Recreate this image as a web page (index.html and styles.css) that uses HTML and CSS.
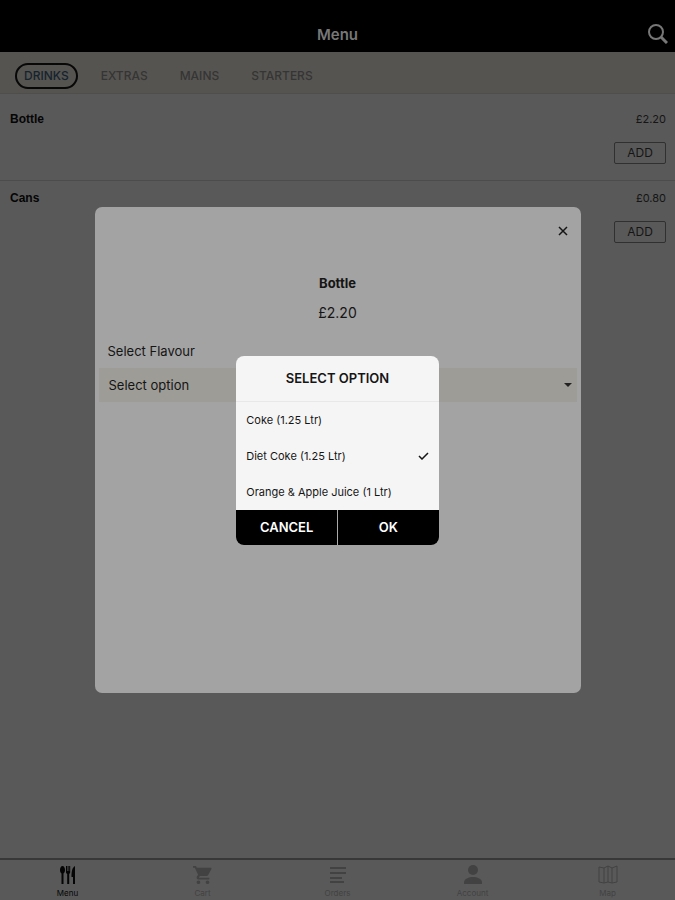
FILE: index.html
```html
<!DOCTYPE html>
<html lang="en">
<head>
    <meta charset="UTF-8">
    <meta name="viewport" content="width=device-width, initial-scale=1.0">
    <title>Menu</title>
    <link rel="stylesheet" href="styles.css">
</head>
<body>
    <header class="header">
        <span></span>
        <h1>Menu</h1>
        <button type="button" class="searchButton" aria-label="Search">
            <svg width="20" height="20" viewBox="0 0 20 20" fill="none" stroke="currentColor">
                <circle cx="8" cy="8" r="7" stroke-width="2"/>
                <path d="M13 13l6 6" stroke-width="3"/>
            </svg>
        </button>
    </header>
    <nav class="categories">
        <a href="#drinks" class="active">DRINKS</a>
        <a href="#extras">EXTRAS</a>
        <a href="#mains">MAINS</a>
        <a href="#starters">STARTERS</a>
    </nav>
    <main class="items">
        <div class="item">
            <h2>Bottle</h2>
            <div class="itemSide">
                <span class="price">£2.20</span>
                <button type="button" class="addButton">ADD</button>
            </div>
        </div>
        <div class="item">
            <h2>Cans</h2>
            <div class="itemSide">
                <span class="price">£0.80</span>
                <button type="button" class="addButton">ADD</button>
            </div>
        </div>
    </main>
    <nav class="bottomNav">
        <a href="#menu" class="active">
            <svg width="20" height="20" viewBox="0 0 20 20" fill="currentColor">
                <path d="M4.500 1C6 1 7 3 7 5S6.200 8 5.500 8.500V19h-2V8.500C2.800 8 2 7 2 5s1-4 2.500-4z"/>
                <path d="M8 1h1v5h.6V1h1v5h.6V1h1v6c0 1-.4 1.500-1 2v10h-2V9C8.400 8.500 8 8 8 7z"/>
                <path d="M17 1v18h-2v-7h-1.500C13.500 7 14 2.500 17 1z"/>
            </svg>
            <span>Menu</span>
        </a>
        <a href="#cart">
            <svg width="20" height="20" viewBox="1 1 22 22" fill="currentColor">
                <path d="M7 18c-1.100 0-2 .9-2 2s.9 2 2 2 2-.9 2-2-.9-2-2-2zM1 2v2h2l3.600 7.600-1.400 2.400C4.500 15.400 5.500 17 7 17h12v-2H7.400l1.100-2h7.500c.7 0 1.400-.4 1.700-1L21.300 5.500C21.700 4.800 21.200 4 20.400 4H5.200l-.9-2H1zm16 16c-1.100 0-2 .9-2 2s.9 2 2 2 2-.9 2-2-.9-2-2-2z"/>
            </svg>
            <span>Cart</span>
        </a>
        <a href="#orders">
            <svg width="20" height="20" viewBox="0 0 20 20" fill="currentColor">
                <path d="M2 2h16v2H2zM2 7h16v2H2zM2 12h12v2H2zM2 16h14v2H2z"/>
            </svg>
            <span>Orders</span>
        </a>
        <a href="#account">
            <svg width="20" height="20" viewBox="0 0 20 20" fill="currentColor">
                <circle cx="10" cy="5" r="5"/>
                <path d="M1 19v-2c0-3 5-5 9-5s9 2 9 5v2z"/>
            </svg>
            <span>Account</span>
        </a>
        <a href="#map">
            <svg width="20" height="20" viewBox="0 0 20 20" fill="none" stroke="currentColor">
                <path d="M1 2l5 1v15l-5-1zM6 3l4-2v16l-4 1M10 1l4 2v15l-4-1M14 3l5-2v16l-5 1"/>
            </svg>
            <span>Map</span>
        </a>
    </nav>

    <div class="overlay">
        <section class="productModal" aria-label="Bottle">
            <button type="button" class="closeButton" aria-label="Close">
                <svg width="10" height="10" viewBox="0 0 10 10" stroke="currentColor" stroke-width="1.500">
                    <path d="M1 1l8 8M9 1l-8 8"/>
                </svg>
            </button>
            <h2>Bottle</h2>
            <p class="productPrice">£2.20</p>
            <label for="flavour">Select Flavour</label>
            <div class="selectBox">
                <select id="flavour">
                    <option>Select option</option>
                </select>
                <svg width="8" height="4" viewBox="0 0 8 4" fill="currentColor">
                    <path d="M0 0h8L4 4z"/>
                </svg>
            </div>
        </section>
    </div>

    <div class="overlay">
        <form class="dialog" role="dialog" aria-labelledby="dialogTitle">
            <h2 id="dialogTitle">SELECT OPTION</h2>
            <label class="option">
                <input type="radio" name="option">
                Coke (1.25 Ltr)
            </label>
            <label class="option">
                <input type="radio" name="option" checked>
                Diet Coke (1.25 Ltr)
                <svg width="11" height="8" viewBox="0 0 11 8" fill="none" stroke="currentColor" stroke-width="1.500">
                    <path d="M1 4l3 3 6-6"/>
                </svg>
            </label>
            <label class="option">
                <input type="radio" name="option">
                Orange &amp; Apple Juice (1 Ltr)
            </label>
            <div class="dialogButtons">
                <button type="button">CANCEL</button>
                <button type="button">OK</button>
            </div>
        </form>
    </div>
</body>
</html>
```

FILE: styles.css
```css
* {
    box-sizing: border-box;
}

body {
    font-family: "Inter", sans-serif;
    font-size: 12px;
    background-color: #595959;
    color: #151515;
    margin: 0;
    display: flex;
    flex-direction: column;
    min-height: 100vh;
}

h1, h2, p {
    margin: 0;
}

button {
    font-family: inherit;
    cursor: pointer;
}

a {
    text-decoration: none;
}

.header {
    display: grid;
    grid-template-columns: 1fr auto 1fr;
    align-items: center;
    background-color: #000;
    color: #777;
    padding: 16px 7px 0;
    height: 52px;
}

.header h1 {
    font-size: 15px;
    font-weight: 600;
}

.searchButton {
    justify-self: end;
    display: flex;
    padding: 0;
    border: none;
    background: none;
    color: #777;
}

.categories {
    display: flex;
    align-items: center;
    gap: 14px;
    height: 42px;
    padding: 6px 15px 0;
    background-color: #565450;
    border-bottom: 1px solid #504e4a;
}

.categories a {
    padding: 4px 7px;
    border: 2px solid transparent;
    border-radius: 13px;
    line-height: 14px;
    color: #353535;
    font-weight: 500;
}

.categories .active {
    border-color: #080808;
    color: #15232f;
}

.items {
    flex-grow: 1;
    padding-top: 8px;
}

.item {
    display: flex;
    justify-content: space-between;
    padding: 9px 9px 16px 10px;
    border-bottom: 1px solid #4c4c4c;
}

.item:last-child {
    border-bottom: none;
}

.item h2 {
    font-family: "Liberation Sans", sans-serif;
    font-size: 12px;
    line-height: 16px;
    color: #050505;
}

.itemSide {
    display: flex;
    flex-direction: column;
    align-items: flex-end;
    gap: 15px;
}

.price {
    font-size: 11px;
    line-height: 16px;
}

.addButton {
    width: 52px;
    height: 22px;
    padding: 0;
    border: 1px solid #303030;
    border-radius: 2px;
    background: none;
    color: #151515;
    font-size: 12px;
    line-height: 20px;
}

.bottomNav {
    display: flex;
    border-top: 2px solid #383838;
    padding: 5px 0 1px;
}

.bottomNav a {
    flex: 1;
    display: flex;
    flex-direction: column;
    align-items: center;
    gap: 3px;
    color: #424242;
    font-size: 8px;
    line-height: 11px;
}

.bottomNav .active {
    color: #050505;
}

.overlay {
    position: fixed;
    inset: 0;
    display: flex;
    align-items: center;
    justify-content: center;
}

.productModal {
    display: flex;
    flex-direction: column;
    width: 72%;
    aspect-ratio: 1;
    padding: 16px 4px;
    background-color: #a3a3a3;
    border-radius: 7px;
}

.closeButton {
    align-self: flex-end;
    display: flex;
    margin: 0 6px 34px;
    padding: 3px;
    border: none;
    background: none;
    color: #151515;
}

.productModal h2 {
    font-size: 13px;
    font-weight: 700;
    line-height: 20px;
    text-align: center;
}

.productPrice {
    margin: 10px 0 18px;
    font-size: 14px;
    line-height: 20px;
    text-align: center;
}

.productModal label {
    padding: 0 9px;
    font-size: 13px;
    line-height: 20px;
}

.selectBox {
    display: grid;
    align-items: center;
    margin-top: 7px;
    color: #222;
}

.selectBox select {
    grid-area: 1 / 1;
    appearance: none;
    width: 100%;
    height: 34px;
    padding: 0 10px;
    border: none;
    background-color: #9e9c96;
    color: #151515;
    font-family: inherit;
    font-size: 13px;
}

.selectBox svg {
    grid-area: 1 / 1;
    justify-self: end;
    margin-right: 5px;
    pointer-events: none;
}

.dialog {
    width: 30%;
    min-width: 202px;
    background-color: #f5f5f5;
    border-radius: 8px;
    overflow: hidden;
}

.dialog h2 {
    font-size: 13px;
    font-weight: 600;
    line-height: 45px;
    text-align: center;
    border-bottom: 1px solid #e8e8e8;
}

.option {
    display: flex;
    align-items: center;
    height: 36px;
    padding: 0 10px;
    font-size: 11px;
    cursor: pointer;
}

.option input {
    appearance: none;
    width: 0;
    margin: 0;
}

.option svg {
    margin-left: auto;
}

.dialogButtons {
    display: flex;
    gap: 1px;
    background-color: #aaa;
}

.dialogButtons button {
    flex: 1;
    height: 35px;
    border: none;
    background-color: #000;
    color: #fff;
    font-size: 13px;
    font-weight: 600;
}
```
